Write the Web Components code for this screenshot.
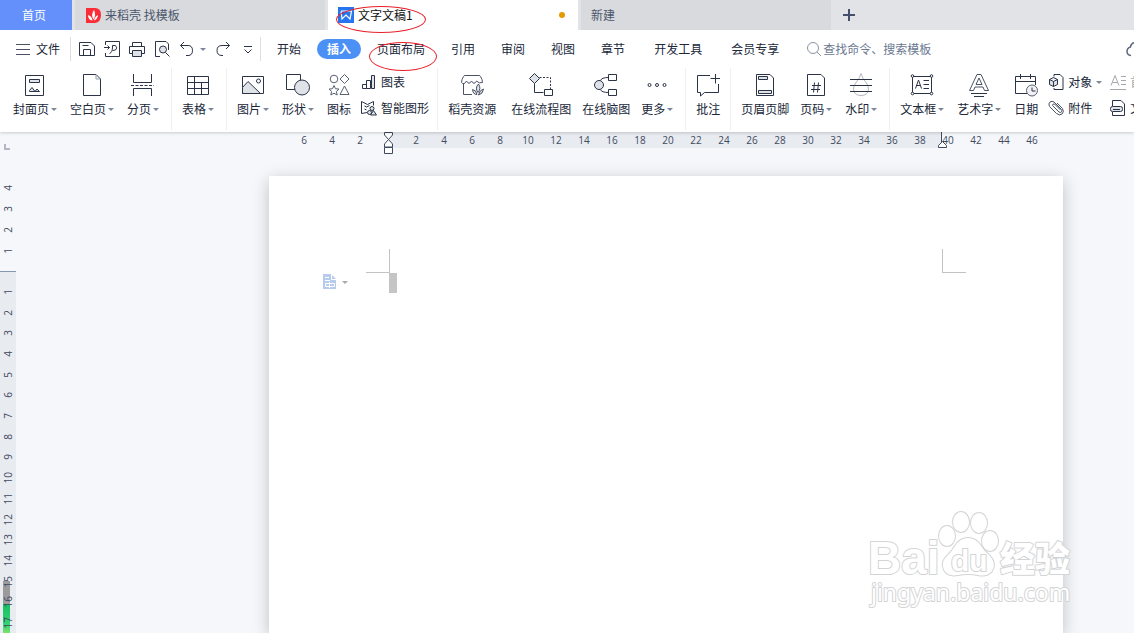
<!DOCTYPE html>
<html lang="zh-CN">
<head>
<meta charset="utf-8">
<title>文字文稿1</title>
<style>
    html, body {
        margin: 0;
        height: 100%;
    }
    body {
        --ink: #2b3347;
        --muted: #6b7891;
        --strip: #e8ebf0;
        --canvas: #f5f7fa;
        font: 12px/18px "Noto Sans CJK SC", "Noto Sans", sans-serif;
        color: #20283a;
        overflow: hidden;
    }
</style>
</head>
<body>
<writer-app></writer-app>

<script>
const ICONS = {
    // 24px ribbon icons
    cover: '<path d="M2.5 2.5h18v20h-18z"/><path class="g" d="M6.5 6.5h10v3h-10z"/><path class="g" d="M6.5 18.5v-1l2.5-3 3 4 2-2.5 2.5 2.5z"/>',
    blank: '<path d="M3.5 1.5H16l4.5 4.5v16.5h-17z"/><path d="M16 1.5V6h4.5" stroke="#98a0ad"/>',
    pagebreak: '<path d="M2.5 1v8.5h18V1M2.5 23v-7.5h18V23"/><path d="M0 12.5h23" stroke-dasharray="3 1.5"/>',
    table: '<path d="M1.5 3.5h21v18h-21zM1.5 9.5h21M1.5 15.5h21M8.5 3.5v18M15.5 9.5v12"/>',
    picture: '<path d="M1.5 3.5h21v17h-21z"/><path class="g" d="M1.5 14.5l5.5-6 12.5 12h-18z"/><circle cx="17.5" cy="8" r="2"/>',
    shapes: '<path d="M.5 1.5h14v15H.5z"/><circle class="g" cx="16" cy="14.5" r="7.5"/>',
    icons: '<g stroke="#596173"><circle cx="7" cy="6" r="3.8"/><path d="M17.5 1.5L22 6l-4.5 4.5L13 6zM17.5 13l4.5 8.5h-9zM7 12.5l1.5 3.2 3.5.4-2.6 2.3.8 3.6L7 20.2 3.8 22l.8-3.6L2 16.1l3.5-.4z"/></g>',
    store: '<g stroke="#4a5264"><path d="M1.5 9.5q0-3 2-6 .5-1 1.5-1h14q1 0 1.500 1 2 3 2 6M1.5 9.500q2.500 3 5-1.500 2.500 4.500 5 0 2.500 4.500 5 0 2.500 3 6 1.500M3.500 11v10.500H12"/><path class="g" d="M18 19.500q-3.500-4.500.5-8.500 3 4.500-.5 8.500zM17 21.500q-4 0-4.500-5 4 .5 4.500 5zM18.500 22q4.500-1 5-6-4 1-5 6z"/></g>',
    flow: '<path class="g" d="M5.5.5l5 5-5 5-5-5z"/><path d="M10.5 4.5h11V16" stroke-dasharray="2 1.5"/><path d="M5.5 10.5v9h9M15.5 16.5h8v6h-8z"/>',
    mind: '<circle class="g" cx="5" cy="12" r="4.5"/><path d="M14.5 1.5h8v6h-8zM14.5 16.5h8v6h-8zM6.5 7.5q1-3 8-3M6.5 16.5q1 3 8 3"/>',
    more: '<circle cx="4.5" cy="12" r="1.5"/><circle cx="12" cy="12" r="1.5"/><circle cx="19.5" cy="12" r="1.5"/>',
    comment: '<path d="M14 2.5H1.5v17h3V23l4-3.5h14V11M19.5 1v9.5M14.5 5.5h9.5"/>',
    headfoot: '<path d="M3.5 1.5H17l3.5 3.5v17.5h-17z"/><path class="g" d="M5.5 3.5h9v3h-9zM5.5 17.5h13v3h-13z"/>',
    pageno: '<path d="M3.5 1.5H17l3.5 3.5v17.5h-17z"/><path d="M8 12.5h9M7 16.5h9M10.5 9.5l-1 10M14.5 9.5l-1 10"/>',
    watermark: '<path stroke="#b4b7bd" d="M12 .5q-1.5 5-5 9-2.500 3-2.500 6.500Q5 22.500 12 22.500t7.500-6.500q0-3.500-2.500-6.500-3.500-4-5-9z"/><path d="M1 6.5h22M1 12.5h22M1 18.5h22"/>',
    textbox: '<path d="M2.5 3.5h19v17h-19z"/><path d="M5.5 15.5l3-8.500 3 8.500M6.5 12.5h4M13.5 7.5H19M13.5 11.5H19M13.5 15.5H19"/><g fill="#fff"><circle cx="2.5" cy="3" r="1.300"/><circle cx="21.5" cy="3" r="1.300"/><circle cx="2.5" cy="20.5" r="1.300"/><circle cx="21.5" cy="20.5" r="1.300"/></g>',
    wordart: '<path d="M10 1.5h4l7.5 16h-4L16 14H8l-1.500 3.500h-4zM12 5l-3 6.500h6z" stroke="#4a5264"/><path d="M4 20.5h16M7 23.5h10"/>',
    date: '<path d="M13 20.5H1.5v-17h20V12M1.5 8.5h20M6.5 1v5M16.5 1v5"/><circle cx="18" cy="17.5" r="5.5" fill="#f0f1f3" stroke="#596173"/><path d="M18 14.5v3.500h3.500"/>',
    // 16px icons
    chart: '<path d="M1.5 10.5h4v4h-4z"/><path d="M5.5 6.5h4v8h-4z"/><path class="g" d="M10.5 1.5h3v13h-3z"/>',
    smart: '<path d="M6 12.5L.5 13.500V1.500l6 3 6-3v4M3.500 6l2 1 3-1.500M3.500 9l2 1"/><g class="g"><circle cx="11" cy="8.5" r="2"/><circle cx="8.500" cy="12.500" r="2"/><path d="M12.500 10.500l3 4.500h-6z"/></g>',
    object: '<path d="M6 2.5V.5h6l3 3v12H6v-1.5"/><path class="g" d="M5.5 3.5l4 2v5l-4 2-4-2v-5zM1.5 5.5l4 2 4-2M5.5 7.5v5"/>',
    clip: '<path stroke="#4a5264" d="M4.5 5.5l6.5 6.5q1.5 1 2.5 0t0-2.500L6 2Q4 .5 2 2t-.5 4.500l7 7q3 2.500 5.500.5t.5-5.500L9 3M4.5 5.5q0-2 2-1.500l6 6"/>',
    dropcap: '<path stroke="#a5a8ae" d="M1 11.5L5 1.5l4 10M2.5 8.5h5M11 2.5h5M11 6.5h5M11 10.5h5M0 15.5h16"/>',
    parts: '<path d="M2.5 6V.5H11L14.5 4v11.500h-12V12"/><rect class="g" x=".5" y="6.5" width="12" height="5" rx="2"/><path d="M3 9.5h7"/>',
    menu: '<path stroke="#4a5264" d="M1 3.5h14M1 8.5h14M1 13.5h14"/>',
    save: '<path d="M.5 1.5H12L15.5 5v9.500H.5zM4.5 14V8.500h7V14M3.5 4.5h6"/>',
    exportpdf: '<path d="M1.5 4V.5h14v15h-14V12M0 6.5h5.500M3.5 4.5l2 2-2 2M5.5 12.5q3-1 3-6.500V4.500h3q2.500 2.500 0 4.500l-3 .5"/>',
    print: '<path d="M3.5 5V1.5h9V5M3.5 12.5h-3v-7h15v7h-3"/><path class="g" d="M3.5 9.5h9v6h-9z"/>',
    preview: '<path d="M6 15.5H1.5V.5H12L14.5 3v6"/><circle class="g" cx="9" cy="8.5" r="3.5"/><path d="M11.5 11.5l4 4"/>',
    undo: '<path d="M5 1L1.5 4.5 5 8M1.5 4.5H9q4.500 0 4.500 5t-4.500 5H7"/>',
    redo: '<path d="M11 1l3.5 3.5L11 8M14.5 4.5H7q-5 0-5 5t5 5h1"/>',
    overflow: '<path d="M4 5.5h8M4.5 8.5L8 12l3.500-3.500"/>',
    search: '<g stroke="#8a93a6"><circle cx="7" cy="7" r="5.5"/><path d="M11 11l4 4"/></g>',
    cloud: '<path stroke="#5c677d" stroke-width="1.5" d="M5 14.5q-4-.5-4-4T4.500 6Q5 1.500 10 1.500t6 4"/>',
    plus: '<path stroke="#44506a" stroke-width="2" d="M8 2v12M2 8h12"/>',
    docer: '<path d="M1 1h9q6 0 6 7t-6 8H1z" fill="#fb2c36" stroke="none"/><path fill="#fff" stroke="none" d="M8.5 12.5q-3-5 .5-9.500 2.500 5-.5 9.500zM7.5 13.5Q3 13 3 8q4 1 4.500 5.500zM9 13.5Q12.5 12.5 13 8 9.500 9.500 9 13.500z"/>',
    writer: '<path d="M0 0h16v16H0z" fill="#2475ee" stroke="none"/><path stroke="#fff" stroke-width="1.2" d="M3 4.5l1 7.500 4-4 4 4 1.500-8H3"/>',
    pagetool: '<path d="M1 0h8l5 5v10H1z" fill="#b7ccec" stroke="none"/><path stroke="#fff" d="M9.5 0v5.500H14M3 3.5h4M3 6.5h5M3.500 9.5h9v3h-9zM7.5 8v6"/>'
};

// Shared base: puts a template in an open shadow root
class BaseElement extends HTMLElement {
    constructor() {
        super();
        this.attachShadow({ mode: 'open' });
    }

    connectedCallback() {
        const tpl = document.createElement('template');
        tpl.innerHTML = this.template();
        this.shadowRoot.replaceChildren(tpl.content.cloneNode(true));
    }
}

class UiIcon extends BaseElement {
    template() {
        const size = this.getAttribute('size') || 16;
        return `
            <style>
                :host { display: block; flex: none; }
                svg { display: block; fill: none; stroke: var(--ink); }
                .g { fill: #dfe2e6; }
            </style>
            <svg width="${size}" height="${size}" viewBox="0 0 ${size} ${size}" aria-hidden="true">${ICONS[this.getAttribute('name')]}</svg>
        `;
    }
}

class UiCaret extends BaseElement {
    template() {
        return `
            <style>
                :host {
                    flex: none;
                    display: block;
                    width: 0;
                    border: solid transparent;
                    border-width: 3px 3px 0;
                    border-top-color: var(--caret, #7d879b);
                }
            </style>
        `;
    }
}

class DocTab extends BaseElement {
    template() {
        const icon = this.getAttribute('icon');
        return `
            <style>
                :host { display: block; flex: 0 1 250px; position: relative; }
                :host([kind="home"]) { flex-basis: 72px; }
                button {
                    all: unset;
                    box-sizing: border-box;
                    width: 100%;
                    height: 100%;
                    padding: 0 13px 0 10px;
                    display: flex;
                    align-items: center;
                    gap: 4px;
                    background: #d9dadd;
                    color: #4b566c;
                    white-space: nowrap;
                }
                :host([kind="active"]) button { background: #fff; color: #111; }
                :host([kind="home"]) button {
                    background: #6490fb;
                    color: #fff;
                    padding: 0 4px 0 0;
                    justify-content: center;
                }
                i {
                    margin-left: auto;
                    width: 6px;
                    height: 6px;
                    border-radius: 50%;
                    background: #e59a00;
                }
            </style>
            <button role="tab">
                ${icon ? `<ui-icon name="${icon}"></ui-icon>` : ''}
                <span><slot></slot></span>
                ${this.getAttribute('kind') === 'active' ? '<i></i>' : ''}
            </button>
            <slot name="mark"></slot>
        `;
    }
}

// Hand-drawn red ring lying over a tab
class RedRing extends BaseElement {
    template() {
        return `
            <style>
                :host {
                    position: absolute;
                    z-index: 5;
                    box-sizing: border-box;
                    border: 1px solid #e8202a;
                    border-radius: 50%;
                    pointer-events: none;
                }
                :host([size="wide"]) { left: 8px; top: 6px; width: 90px; height: 27px; }
                :host([size="round"]) { left: 2px; top: 3px; width: 68px; height: 29px; }
            </style>
        `;
    }
}

class TabBar extends BaseElement {
    template() {
        return `
            <style>
                :host { display: flex; height: 30px; gap: 3px; background: #e2e3e7; }
                .add { all: unset; display: flex; align-items: center; padding: 0 7px; }
            </style>
            <doc-tab kind="home">首页</doc-tab>
            <doc-tab icon="docer">来稻壳 找模板</doc-tab>
            <doc-tab kind="active" icon="writer">文字文稿1<red-ring slot="mark" size="wide"></red-ring></doc-tab>
            <doc-tab>新建</doc-tab>
            <button class="add" aria-label="新建标签"><ui-icon name="plus"></ui-icon></button>
        `;
    }
}

class MenuTab extends BaseElement {
    template() {
        return `
            <style>
                :host { display: block; position: relative; }
                :host([spaced]) { margin-left: 3px; }
                button {
                    all: unset;
                    display: block;
                    padding: 0 10px;
                    line-height: 20px;
                    border-radius: 10px;
                    white-space: nowrap;
                }
                :host([selected]) button { background: #4a90f5; color: #fff; font-weight: bold; }
            </style>
            <button role="tab"><slot></slot></button>
            <slot name="mark"></slot>
        `;
    }
}

class MenuBar extends BaseElement {
    template() {
        const quick = [
            ['save', '保存'], ['exportpdf', '输出为PDF'], ['print', '打印'], ['preview', '打印预览']
        ];
        return `
            <style>
                :host { display: flex; align-items: center; height: 38px; background: #fff; }
                button { all: unset; display: flex; align-items: center; gap: 5px; white-space: nowrap; }
                .file { padding: 0 10px 0 15px; }
                .quick, nav { display: flex; align-items: center; }
                .quick {
                    gap: 9px;
                    padding: 0 4px 0 8px;
                    border: solid #dcdee3;
                    border-width: 0 1px;
                    height: 24px;
                }
                nav { gap: 6px; padding: 0 6px; }
                label { display: flex; align-items: center; gap: 1px; margin-left: 11px; }
                input {
                    all: unset;
                    width: 160px;
                    color: var(--muted);
                    line-height: 18px;
                }
                input::placeholder { color: var(--muted); opacity: 1; }
                .cloud { margin-left: auto; width: 8px; overflow: hidden; }
            </style>
            <button class="file"><ui-icon name="menu"></ui-icon>文件</button>
            <div class="quick">
                ${quick.map(([icon, name]) => `<button aria-label="${name}"><ui-icon name="${icon}"></ui-icon></button>`).join('')}
                <button aria-label="撤销"><ui-icon name="undo"></ui-icon><ui-caret></ui-caret></button>
                <button aria-label="恢复"><ui-icon name="redo"></ui-icon></button>
                <button aria-label="更多命令"><ui-icon name="overflow"></ui-icon></button>
            </div>
            <nav role="tablist">
                <menu-tab>开始</menu-tab>
                <menu-tab selected>插入</menu-tab>
                <menu-tab>页面布局<red-ring slot="mark" size="round"></red-ring></menu-tab>
                <menu-tab>引用</menu-tab>
                <menu-tab>审阅</menu-tab>
                <menu-tab>视图</menu-tab>
                <menu-tab>章节</menu-tab>
                <menu-tab spaced>开发工具</menu-tab>
                <menu-tab spaced>会员专享</menu-tab>
            </nav>
            <label aria-label="搜索"><ui-icon name="search"></ui-icon><input type="text" placeholder="查找命令、搜索模板"></label>
            <button class="cloud" aria-label="云同步"><ui-icon name="cloud"></ui-icon></button>
        `;
    }
}

class ToolButton extends BaseElement {
    template() {
        return `
            <style>
                :host { display: block; flex: none; }
                :host([caret]) { padding-right: 2px; }
                :host([roomy]) { margin-right: 4px; }
                button {
                    all: unset;
                    display: flex;
                    flex-direction: column;
                    align-items: center;
                    gap: 3px;
                    padding-top: 5px;
                    white-space: nowrap;
                }
                span { display: flex; align-items: center; gap: 2px; }
            </style>
            <button>
                <ui-icon name="${this.getAttribute('icon')}" size="24"></ui-icon>
                <span><slot></slot>${this.hasAttribute('caret') ? '<ui-caret></ui-caret>' : ''}</span>
            </button>
        `;
    }
}

class ToolRow extends BaseElement {
    template() {
        return `
            <style>
                :host { display: block; }
                button {
                    all: unset;
                    display: flex;
                    align-items: center;
                    gap: 4px;
                    height: 26px;
                    white-space: nowrap;
                }
                :host([disabled]) { color: #a5a8ae; }
            </style>
            <button>
                <ui-icon name="${this.getAttribute('icon')}"></ui-icon>
                <slot></slot>
                ${this.hasAttribute('caret') ? '<ui-caret></ui-caret>' : ''}
            </button>
        `;
    }
}

class ToolStack extends BaseElement {
    template() {
        return `
            <style>
                :host { display: flex; flex-direction: column; flex: none; margin: 1px -2px 0 -1px; }
            </style>
            <slot></slot>
        `;
    }
}

class ToolGroup extends BaseElement {
    template() {
        return `
            <style>
                :host { display: flex; flex: none; gap: 11px; padding: 0 10px; height: 62px; border-left: 1px solid #eeeff1; }
                :host(:first-of-type) { padding-left: 13px; border-left: 0; }
            </style>
            <slot></slot>
        `;
    }
}

class RibbonBar extends BaseElement {
    template() {
        return `
            <style>
                :host {
                    display: flex;
                    height: 64px;
                    background: #fff;
                    position: relative;
                    z-index: 1;
                    box-shadow: 0 1px 3px rgba(0, 0, 0, 0.18);
                }
            </style>
            <tool-group>
                <tool-button icon="cover" caret>封面页</tool-button>
                <tool-button icon="blank" caret>空白页</tool-button>
                <tool-button icon="pagebreak" caret>分页</tool-button>
            </tool-group>
            <tool-group>
                <tool-button icon="table" caret>表格</tool-button>
            </tool-group>
            <tool-group>
                <tool-button icon="picture" caret>图片</tool-button>
                <tool-button icon="shapes" caret>形状</tool-button>
                <tool-button icon="icons">图标</tool-button>
                <tool-stack>
                    <tool-row icon="chart">图表</tool-row>
                    <tool-row icon="smart">智能图形</tool-row>
                </tool-stack>
            </tool-group>
            <tool-group>
                <tool-button icon="store" roomy>稻壳资源</tool-button>
                <tool-button icon="flow">在线流程图</tool-button>
                <tool-button icon="mind">在线脑图</tool-button>
                <tool-button icon="more" caret>更多</tool-button>
            </tool-group>
            <tool-group>
                <tool-button icon="comment">批注</tool-button>
            </tool-group>
            <tool-group>
                <tool-button icon="headfoot">页眉页脚</tool-button>
                <tool-button icon="pageno" caret>页码</tool-button>
                <tool-button icon="watermark" caret>水印</tool-button>
            </tool-group>
            <tool-group>
                <tool-button icon="textbox" caret>文本框</tool-button>
                <tool-button icon="wordart" caret>艺术字</tool-button>
                <tool-button icon="date">日期</tool-button>
                <tool-stack>
                    <tool-row icon="object" caret>对象</tool-row>
                    <tool-row icon="clip">附件</tool-row>
                </tool-stack>
                <tool-stack>
                    <tool-row icon="dropcap" disabled>首</tool-row>
                    <tool-row icon="parts">文</tool-row>
                </tool-stack>
            </tool-group>
        `;
    }
}

class RulerTop extends BaseElement {
    template() {
        let cells = '';
        for (let n = -6; n <= 46; n += 2) {
            cells += `<span>${n ? Math.abs(n) : ''}</span>`;
        }
        return `
            <style>
                :host {
                    display: flex;
                    height: 16px;
                    padding-left: 274px;
                    font: 10px/16px "Open Sans", "Noto Sans", sans-serif;
                    color: #3f4a60;
                }
                .scale {
                    display: flex;
                    position: relative;
                    background: linear-gradient(var(--strip), var(--strip)) 98px 0 / 554px 16px no-repeat;
                }
                span { width: 28px; text-align: center; }
                svg { position: absolute; top: 0; fill: #fff; stroke: #3f4a60; }
                .indent { left: 94px; }
                .right { left: 648px; }
            </style>
            <div class="scale">
                ${cells}
                <svg class="indent" width="9" height="22"><path d="M.5.5h8V3l-4 4.500 4 4.500v3h-8v-3l4-4.500L.5 3zM.5 15.500h8v6h-8z"/></svg>
                <svg class="right" width="9" height="17"><path d="M3.500 0v10M.5 15.500v-2l4-4 4 4v2z"/></svg>
            </div>
        `;
    }
}

class RulerSide extends BaseElement {
    template() {
        let cells = '';
        for (let n = -4; n <= 17; n++) {
            cells += n ? `<div class="${n > 0 ? 'in' : ''}"><span>${Math.abs(n)}</span></div>` : '<div class="zero"></div>';
        }
        return `
            <style>
                :host {
                    display: flex;
                    flex-direction: column;
                    flex: none;
                    width: 16px;
                    position: relative;
                    font: 10px/16px "Open Sans", "Noto Sans", sans-serif;
                    color: #3f4a60;
                }
                header { height: 46px; flex: none; }
                header::before {
                    content: '';
                    display: block;
                    width: 4px;
                    height: 4px;
                    margin: 12px 0 0 4px;
                    border: solid #b3b8c4;
                    border-width: 0 0 2px 2px;
                }
                header { display: flex; align-items: flex-start; }
                div { flex: 1; min-height: 0; display: flex; align-items: center; justify-content: center; }
                .in { background: var(--strip); }
                .zero { flex-direction: column; align-items: stretch; }
                .zero::before, .zero::after { content: ''; flex: 1; }
                .zero::after { background: var(--strip); border-top: 1px solid #8598ad; }
                span { writing-mode: vertical-rl; transform: rotate(180deg); z-index: 1; }
                .meter {
                    position: absolute;
                    left: 3px;
                    bottom: 0;
                    width: 7px;
                    height: 52px;
                    background: linear-gradient(#9b9b9b 23px, #16c062 23px, #35d374 44px, #7de36d);
                }
            </style>
            <header></header>
            ${cells}
            <i class="meter"></i>
        `;
    }
}

class PaperSheet extends BaseElement {
    template() {
        return `
            <style>
                :host {
                    display: block;
                    box-sizing: border-box;
                    flex: 1;
                    width: 794px;
                    margin: 28px 0 0 253px;
                    padding: 73px 97px 0;
                    background: #fff;
                    box-shadow: 0 4px 16px rgba(0, 0, 0, 0.22);
                }
                .corners { display: flex; justify-content: space-between; }
                .corners i {
                    box-sizing: border-box;
                    width: 24px;
                    height: 24px;
                    border: solid #c3c3c3;
                    border-width: 0 1px 1px 0;
                }
                .corners i + i { border-width: 0 0 1px 1px; }
                .line { display: flex; align-items: flex-start; margin-left: -44px; --caret: #a9a9a9; }
                button { all: unset; display: flex; align-items: center; gap: 4px; width: 67px; padding-top: 1px; }
                .caret { width: 8px; height: 20px; background: #c5c5c5; }
            </style>
            <div class="corners"><i></i><i></i></div>
            <div class="line">
                <button aria-label="段落布局"><ui-icon name="pagetool"></ui-icon><ui-caret></ui-caret></button>
                <div class="caret"></div>
            </div>
        `;
    }
}

class SiteMark extends BaseElement {
    template() {
        return `
            <style>
                :host { display: block; position: absolute; right: 58px; bottom: 20px; }
                svg { display: block; fill: #fff; stroke: #d3d4d6; stroke-width: 2; stroke-linejoin: round; paint-order: stroke; }
                .logo { font: bold 46px "Liberation Sans", sans-serif; }
                .du { font: bold 30px "Liberation Sans", sans-serif; }
                .cjk { font: 900 35px "Noto Sans CJK SC", sans-serif; }
                .url { font: 23px "Noto Sans", sans-serif; }
            </style>
            <svg width="208" height="104">
                <text class="logo" x="0" y="65">Bai</text>
                <ellipse cx="79" cy="27" rx="8" ry="10"/>
                <ellipse cx="93" cy="13" rx="8" ry="10"/>
                <ellipse cx="111" cy="14" rx="8" ry="10"/>
                <ellipse cx="122" cy="32" rx="8" ry="10"/>
                <path d="M100 29q8 0 13 8 3 5 8 9 8 8 3 16-5 6-14 4-10-2-20 0-10 2-14-5-4-8 4-15 4-4 7-9 5-8 13-8z"/>
                <text class="du" x="83" y="62">du</text>
                <text class="cjk" x="132" y="63">经验</text>
                <text class="url" x="3" y="92">jingyan.baidu.com</text>
            </svg>
        `;
    }
}

class WriterApp extends BaseElement {
    template() {
        return `
            <style>
                :host {
                    display: flex;
                    flex-direction: column;
                    height: 100vh;
                    overflow: hidden;
                    position: relative;
                    background: var(--canvas);
                }
                tab-bar, menu-bar, ribbon-bar { flex: none; }
                tab-bar { position: relative; z-index: 3; }
                menu-bar { position: relative; z-index: 2; }
                main { flex: 1; min-height: 0; display: flex; }
                .desk { flex: 1; min-width: 0; display: flex; flex-direction: column; }
            </style>
            <tab-bar></tab-bar>
            <menu-bar></menu-bar>
            <ribbon-bar></ribbon-bar>
            <main>
                <ruler-side></ruler-side>
                <div class="desk">
                    <ruler-top></ruler-top>
                    <paper-sheet></paper-sheet>
                </div>
            </main>
            <site-mark></site-mark>
        `;
    }
}

customElements.define('ui-icon', UiIcon);
customElements.define('ui-caret', UiCaret);
customElements.define('red-ring', RedRing);
customElements.define('doc-tab', DocTab);
customElements.define('tab-bar', TabBar);
customElements.define('menu-tab', MenuTab);
customElements.define('menu-bar', MenuBar);
customElements.define('tool-button', ToolButton);
customElements.define('tool-row', ToolRow);
customElements.define('tool-stack', ToolStack);
customElements.define('tool-group', ToolGroup);
customElements.define('ribbon-bar', RibbonBar);
customElements.define('ruler-top', RulerTop);
customElements.define('ruler-side', RulerSide);
customElements.define('paper-sheet', PaperSheet);
customElements.define('site-mark', SiteMark);
customElements.define('writer-app', WriterApp);
</script>
</body>
</html>
